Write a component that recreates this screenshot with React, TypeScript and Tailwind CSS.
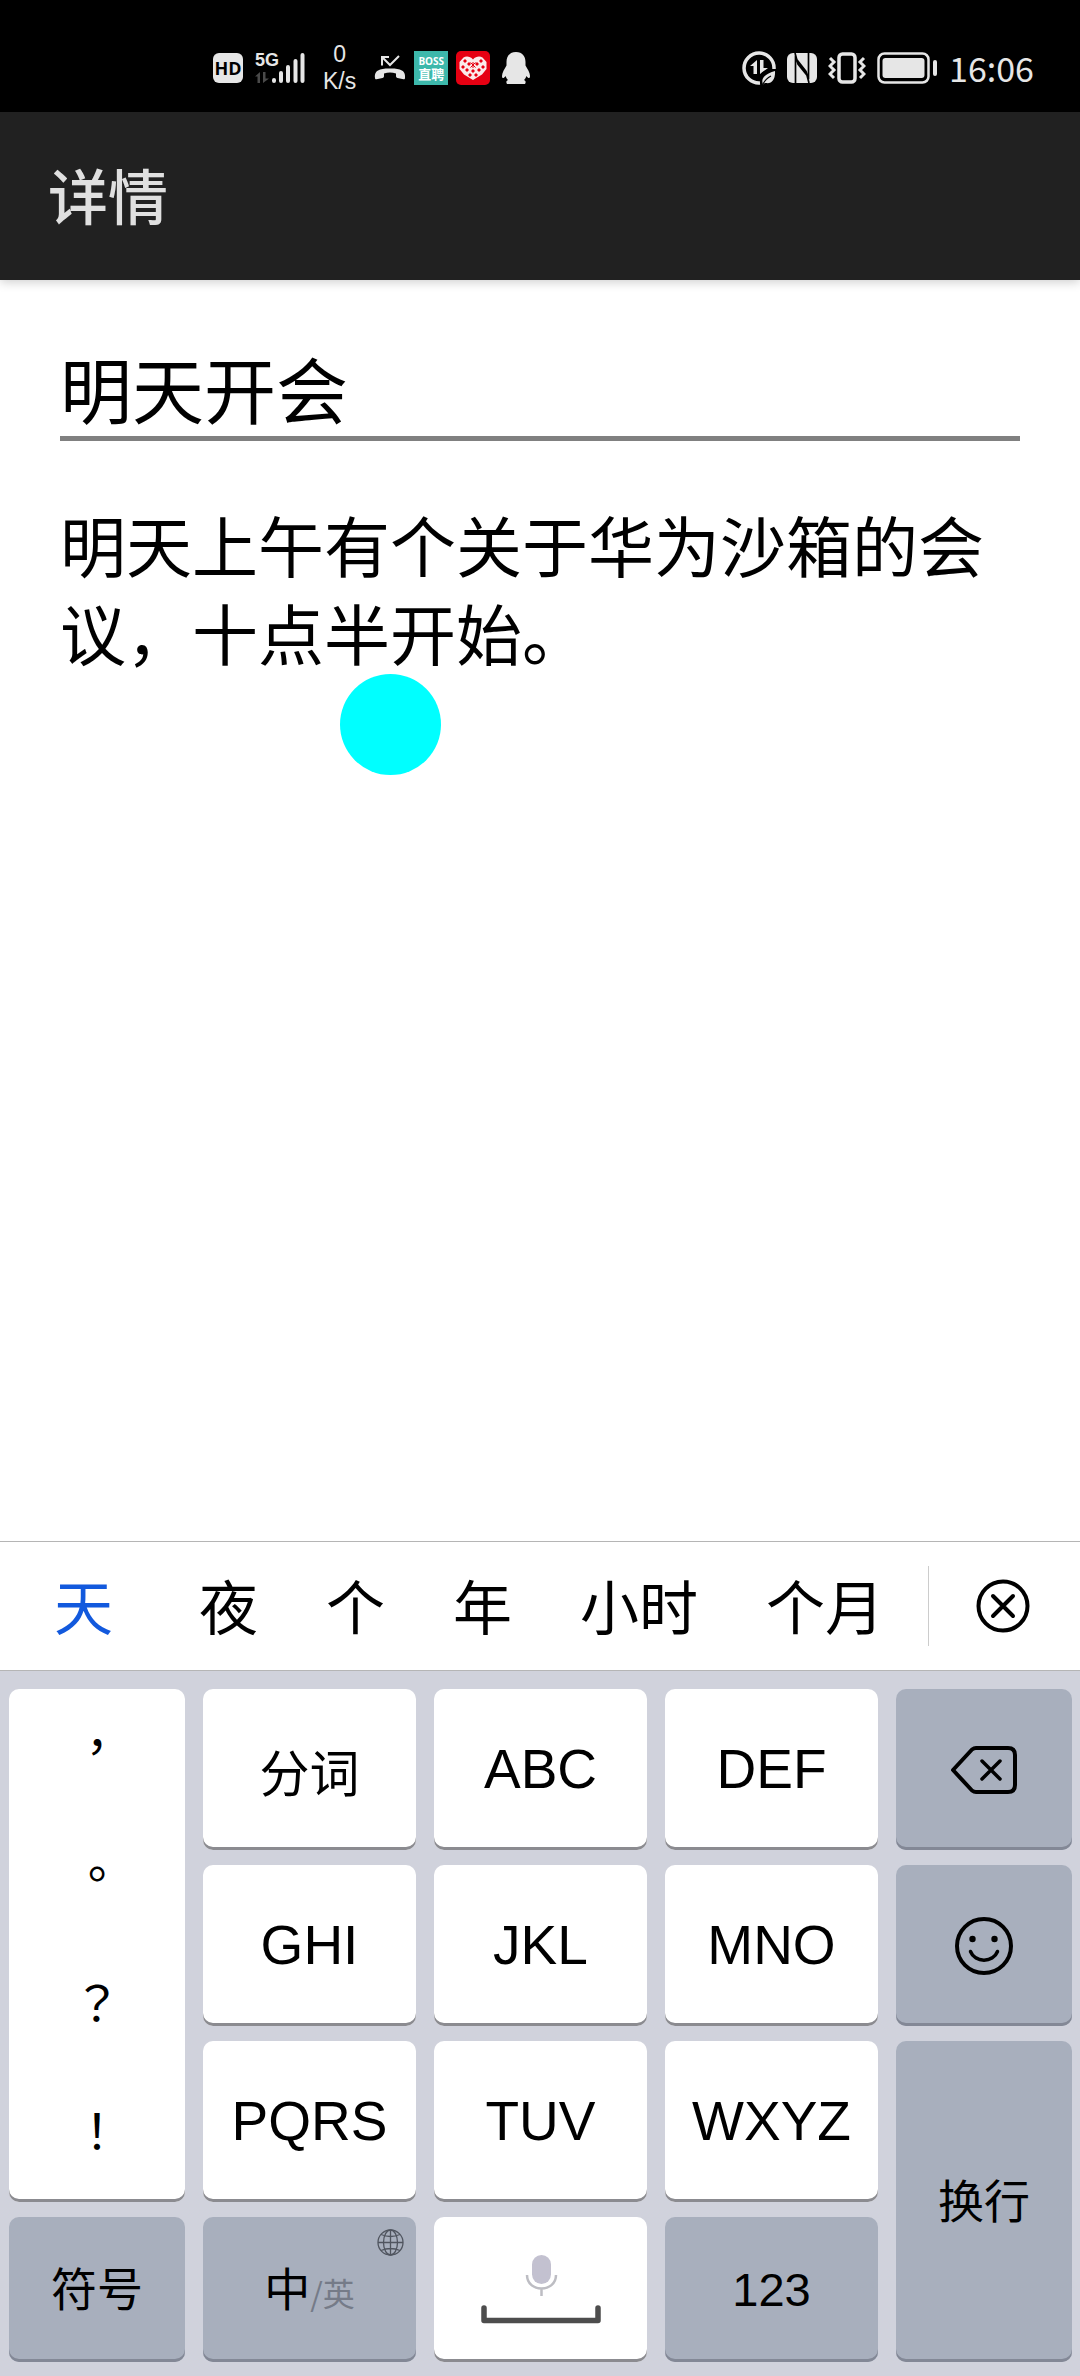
import { useState } from "react";
import type { ReactNode } from "react";

function HdIcon() {
  return (
    <span className="grid size-[30px] place-items-center rounded-[6px] bg-[#e6e6e6] font-['Open_Sans',sans-serif] text-[18px] leading-none font-bold text-black">
      HD
    </span>
  );
}

function Signal() {
  return (
    <span className="relative flex">
      <svg width="50" height="34" viewBox="0 0 50 34" aria-hidden="true">
        <path d="M5 21v11H2.500v-6.500H0zM8 21h2.500v6.500H14L8 32z" fill="#4a4a4a" />
        <path
          d="M19 29v1M26 22v8M33 16v14M40.500 10v20M47.500 4v26"
          stroke="#e6e6e6"
          strokeWidth="4"
          strokeLinecap="round"
        />
      </svg>
      <span className="absolute top-0 left-0 font-['Liberation_Sans_Narrow','Liberation_Sans',sans-serif] text-[18px] leading-[18px] font-bold text-[#e6e6e6]">
        5G
      </span>
    </span>
  );
}

function MissedCallIcon() {
  return (
    <svg width="32" height="26" viewBox="0 0 32 26" fill="none" aria-hidden="true">
      <path d="M8 10.500V2h7M8 2l8 8L25 1" stroke="#e6e6e6" strokeWidth="2" />
      <path d="M1 23c-1-9 7-9.500 15-9.500S32 14 31 23c0 1-.6 1.500-1.500 1.300l-6-1.300c-1-.3-1.500-1-1.500-2v-2.500c-4-1.300-8-1.300-12 0V21c0 1-.5 1.700-1.500 2l-6 1.300C1.600 24.500 1 24 1 23z" fill="#e6e6e6" />
    </svg>
  );
}

function BossIcon() {
  return (
    <span className="flex size-[34px] flex-col items-center justify-center bg-[#3db8ab] text-white">
      <span className="font-['Open_Sans',sans-serif] text-[10px] leading-[12px] font-bold">BOSS</span>
      <span className="font-['Noto_Sans_CJK_SC',sans-serif] text-[13px] leading-[14px] font-bold">直聘</span>
    </span>
  );
}

function HeartIcon() {
  return (
    <svg width="34" height="34" viewBox="0 0 34 34" aria-hidden="true">
      <rect width="34" height="34" rx="5" fill="#e60012" />
      <path d="M17 8.500 C14 5 10 5 7.500 6.500 L3.500 11 V18 L8 23.500 L17 29 L26 23.500 L30.500 18 V11 L26.500 6.500 C24 5 20 5 17 8.500z" fill="#fbeaea" />
      <path
        d="M9 8l2 2-2 2-2-2zM25 8l2 2-2 2-2-2zM13 11l2 2-2 2-2-2zM21 11l2 2-2 2-2-2zM7 14l2 2-2 2-2-2zM27 14l2 2-2 2-2-2zM11 17l2 2-2 2-2-2zM23 17l2 2-2 2-2-2zM17 18l2 2-2 2-2-2zM14 22l2 2-2 2-2-2zM20 22l2 2-2 2-2-2z"
        fill="#e60012"
      />
      <path d="M14.500 11.500l5 5M19.500 11.500l-5 5M17 11v6" stroke="#e60012" strokeWidth="1" />
    </svg>
  );
}

function PenguinIcon() {
  return (
    <svg width="28" height="34" viewBox="0 0 28 34" aria-hidden="true">
      <path d="M14 1c6.500 0 9.500 4.500 9.500 10v3.500c2 3.500 4.500 7 4.500 10.500 0 2.500-1.500 3-3.500 0-.5 1.500-1.500 3-2.500 4 2 .8 2 2.500 1 4H5c-1-1.500-1-3.200 1-4-1-1-2-2.500-2.500-4C1.500 28 0 27.500 0 25c0-3.500 2.500-7 4.500-10.500V11C4.500 5.500 7.500 1 14 1z" fill="#e6e6e6" />
    </svg>
  );
}

function DataSaverIcon() {
  return (
    <svg width="34" height="34" viewBox="0 0 34 34" fill="none" aria-hidden="true">
      <path d="M32 18A15 15 0 1 0 18 32" stroke="#e6e6e6" strokeWidth="3.500" />
      <path d="M15 9v14h-3.500v-8H8zM18 9h3.500v8H26l-8 6z" fill="#e6e6e6" />
      <circle cx="26" cy="27" r="8" fill="#000" />
      <path d="M33 20c.5 8-3 13-9 12-1.200 0-2 .3-3 1.500-2-5 0-10 12-13.500z" fill="#e6e6e6" />
      <path d="M21 33c2-4 4-6 8-8" stroke="#000" strokeWidth="1.200" />
    </svg>
  );
}

function NfcIcon() {
  return (
    <svg width="30" height="30" viewBox="0 0 30 30" aria-hidden="true">
      <rect width="30" height="30" rx="6" fill="#e6e6e6" />
      <path d="M8.500 30V5L19 18.500l3 11.500M21.500 0v24L11 11 8 0" fill="none" stroke="#000" strokeWidth="1.700" />
    </svg>
  );
}

function VibrateIcon() {
  return (
    <svg width="38" height="32" viewBox="0 0 38 32" fill="none" stroke="#e6e6e6" aria-hidden="true">
      <rect x="11" y="2" width="16" height="28" rx="3.500" strokeWidth="3.500" />
      <path d="M2 6l4 4-4 4 4 4-4 4 4 4M36 6l-4 4 4 4-4 4 4 4-4 4" strokeWidth="3" />
    </svg>
  );
}

function BatteryIcon() {
  return (
    <svg width="61" height="32" viewBox="0 0 61 32" fill="none" aria-hidden="true">
      <rect x="1.500" y="1.500" width="50" height="29" rx="6" stroke="#e6e6e6" strokeWidth="2.500" />
      <rect x="5.500" y="6" width="42" height="20" rx="3" fill="#e6e6e6" />
      <path d="M58 10v12" stroke="#e6e6e6" strokeWidth="4" strokeLinecap="round" />
    </svg>
  );
}

function StatusBar() {
  return (
    <div className="flex h-28 items-center justify-between bg-black pt-6 pr-[46px] pl-[213px]">
      <div className="flex items-center">
        <HdIcon />
        <span className="ml-3">
          <Signal />
        </span>
        <span className="ml-[18px] flex flex-col items-center font-['Liberation_Sans',sans-serif] text-[23px] leading-[27px] text-[#e6e6e6]">
          <span>0</span>
          <span>K/s</span>
        </span>
        <span className="ml-[18px] flex items-center gap-2">
          <MissedCallIcon />
          <BossIcon />
          <HeartIcon />
          <span className="ml-1">
            <PenguinIcon />
          </span>
        </span>
      </div>
      <div className="flex items-center gap-[11px]">
        <DataSaverIcon />
        <NfcIcon />
        <VibrateIcon />
        <BatteryIcon />
        <time className="font-['Noto_Sans_CJK_SC',sans-serif] text-[34px] leading-none text-[#e6e6e6]">16:06</time>
      </div>
    </div>
  );
}

type KeyProps = { label: string; children: ReactNode; tone?: "light" | "dark"; span?: boolean };

function Key({ label, children, tone = "light", span = false }: KeyProps) {
  const toneClass =
    tone === "light"
      ? "bg-white shadow-[inset_0_-3px_0_#8b8b90]"
      : "bg-[#a8afbd] shadow-[inset_0_-3px_0_#838896]";
  return (
    <button
      type="button"
      aria-label={label}
      className={`relative flex items-center justify-center rounded-[10px] text-black ${toneClass} ${span ? "row-span-2" : ""}`}
    >
      {children}
    </button>
  );
}

function Latin({ children }: { children: string }) {
  return <span className="font-['Liberation_Sans',sans-serif] text-[55px] leading-none">{children}</span>;
}

function Hanzi({ children }: { children: string }) {
  return <span className="pb-2 font-['Noto_Sans_CJK_SC',sans-serif] text-[46px] leading-none">{children}</span>;
}

function BackspaceIcon() {
  return (
    <svg width="68" height="50" viewBox="0 0 68 50" fill="none" stroke="#000" strokeLinejoin="round" strokeLinecap="round" aria-hidden="true">
      <path d="M3 25L22 4.500Q24 3 26 3H58Q65 3 65 10V40Q65 47 58 47H26Q24 47 22 45.500Z" strokeWidth="4" />
      <path d="M32 16L50 34M50 16L32 34" strokeWidth="3.500" />
    </svg>
  );
}

function SmileIcon() {
  return (
    <svg width="58" height="58" viewBox="0 0 58 58" fill="none" stroke="#000" aria-hidden="true">
      <circle cx="29" cy="29" r="27" strokeWidth="4" />
      <path d="M15.500 34.500C20 46 38 46 42.500 34.500" strokeWidth="3.500" strokeLinecap="round" />
      <circle cx="17.500" cy="22" r="3.200" fill="#000" stroke="none" />
      <circle cx="39.500" cy="22" r="3.200" fill="#000" stroke="none" />
    </svg>
  );
}

function GlobeIcon() {
  return (
    <svg width="27" height="27" viewBox="0 0 27 27" fill="none" stroke="#50555f" strokeWidth="1.300" aria-hidden="true">
      <circle cx="13.500" cy="13.500" r="12.500" />
      <ellipse cx="13.500" cy="13.500" rx="7" ry="12.500" />
      <path d="M13.500 1v25M1 13.500h25M4 5.500q9.500 4 19 0M4 21.500q9.500-4 19 0" />
    </svg>
  );
}

function SpaceIcon() {
  return (
    <svg width="120" height="70" viewBox="0 0 120 70" fill="none" aria-hidden="true">
      <rect x="51" y="0" width="19" height="29" rx="9.500" fill="#c3c1d0" />
      <path d="M46 20C46 38 75 38 75 20M60.500 34v7" stroke="#bdbdc3" strokeWidth="2.500" />
      <path d="M3 53v12.500h114V53" stroke="#4d4d4d" strokeWidth="5.500" strokeLinecap="round" strokeLinejoin="round" />
    </svg>
  );
}

const candidates = ["天", "夜", "个", "年", "小时", "个月"];
const punctuation = ["，", "。", "？", "！"];

function CandidateBar() {
  return (
    <div className="flex h-[130px] items-center border-y border-[#b5b5b5] bg-white">
      <div className="flex flex-1 items-center pb-1 pl-5 font-['Noto_Sans_CJK_SC',sans-serif] text-[59px] leading-none">
        {candidates.map((word, i) => (
          <button key={word} type="button" className={i === 0 ? "mr-[18px] px-[34px] text-[#1259dd]" : "px-[34px] text-black"}>
            {word}
          </button>
        ))}
      </div>
      <div className="h-20 w-px bg-[#cccccc]" />
      <button type="button" aria-label="关闭" className="flex w-[151px] justify-center pr-1">
        <svg width="54" height="54" viewBox="0 0 54 54" fill="none" stroke="#000" strokeLinecap="round" aria-hidden="true">
          <circle cx="27" cy="27" r="24.500" strokeWidth="4" />
          <path d="M17 17L37 37M37 17L17 37" strokeWidth="4" />
        </svg>
      </button>
    </div>
  );
}

function Keyboard() {
  return (
    <div className="grid grid-cols-[176fr_213fr_213fr_213fr_176fr] grid-rows-[161px_161px_161px_145px] gap-x-[18px] gap-y-[15px] bg-[#d0d2dc] pt-[18px] pr-2 pb-[14px] pl-[9px]">
      <div className="row-span-3 flex flex-col rounded-[10px] bg-white shadow-[inset_0_-3px_0_#8b8b90]">
        {punctuation.map((mark) => (
          <button key={mark} type="button" className="flex-1 pb-5 font-['Noto_Sans_CJK_TC',sans-serif] text-[48px] leading-none text-black">
            {mark}
          </button>
        ))}
      </div>
      <Key label="分词">
        <span className="font-['Noto_Sans_CJK_SC',sans-serif] text-[50px] leading-none">分词</span>
      </Key>
      <Key label="ABC"><Latin>ABC</Latin></Key>
      <Key label="DEF"><Latin>DEF</Latin></Key>
      <Key label="删除" tone="dark"><BackspaceIcon /></Key>

      <Key label="GHI"><Latin>GHI</Latin></Key>
      <Key label="JKL"><Latin>JKL</Latin></Key>
      <Key label="MNO"><Latin>MNO</Latin></Key>
      <Key label="表情" tone="dark"><SmileIcon /></Key>

      <Key label="PQRS"><Latin>PQRS</Latin></Key>
      <Key label="TUV"><Latin>TUV</Latin></Key>
      <Key label="WXYZ"><Latin>WXYZ</Latin></Key>
      <Key label="换行" tone="dark" span><Hanzi>换行</Hanzi></Key>

      <Key label="符号" tone="dark"><Hanzi>符号</Hanzi></Key>
      <Key label="中/英" tone="dark">
        <span className="flex items-baseline pb-2 font-['Noto_Sans_CJK_SC',sans-serif] leading-none">
          <span className="text-[46px]">中</span>
          <span className="text-[32px] text-[#757b88]">/英</span>
        </span>
        <span className="absolute top-3 right-3">
          <GlobeIcon />
        </span>
      </Key>
      <Key label="空格"><SpaceIcon /></Key>
      <Key label="123" tone="dark">
        <span className="font-['Liberation_Sans',sans-serif] text-[47px] leading-none">123</span>
      </Key>
    </div>
  );
}

export default function App() {
  const [title, setTitle] = useState("明天开会");
  const [body, setBody] = useState("明天上午有个关于华为沙箱的会议，十点半开始。");

  return (
    <div className="flex min-h-screen flex-col bg-white font-['Noto_Sans_CJK_SC',sans-serif]">
      <StatusBar />
      <header className="flex h-[168px] items-center bg-[#212121] px-12 pb-1 shadow-[0_2px_10px_rgba(0,0,0,0.2)]">
        <h1 className="text-[60px] leading-none font-medium text-[#e0e0e0]">详情</h1>
      </header>
      <main className="relative flex flex-1 flex-col px-[60px] pt-[65px]">
        <input
          aria-label="标题"
          value={title}
          onChange={(e) => setTitle(e.target.value)}
          className="h-24 w-full border-b-[5px] border-[#808080] bg-transparent pb-2 text-[72px] leading-none text-black outline-none"
        />
        <textarea
          aria-label="内容"
          value={body}
          onChange={(e) => setBody(e.target.value)}
          className="mt-[58px] w-full flex-1 resize-none bg-transparent text-[66px] leading-[88px] text-black outline-none"
        />
        <span className="pointer-events-none absolute top-[394px] left-[340px] size-[101px] rounded-full bg-[#00ffff]" />
      </main>
      <CandidateBar />
      <Keyboard />
    </div>
  );
}
